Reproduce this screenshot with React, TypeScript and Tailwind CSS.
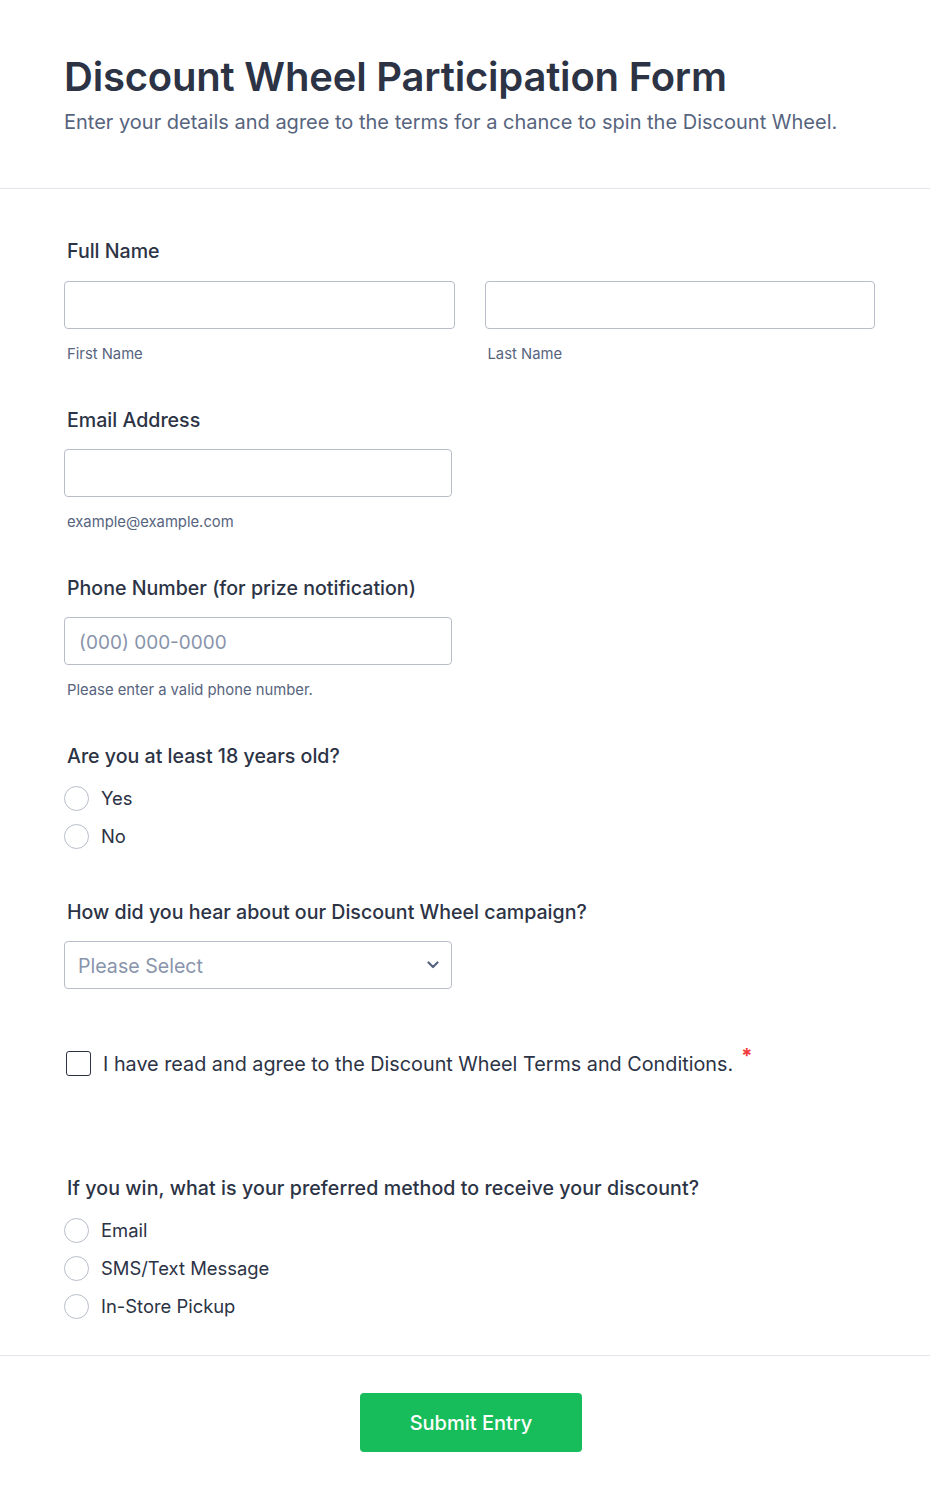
import React from "react"

function Radio({ label }: { label: string }) {
  return (
    <label className="flex items-center h-6 gap-[12px] cursor-pointer">
      <span className="w-[25px] h-[25px] rounded-full border border-[#b8bdc9] bg-white shrink-0" />
      <span className="text-[18.4px] leading-6 text-[#2c3345]">{label}</span>
    </label>
  )
}

function FieldLabel({ children, className = "" }: { children: React.ReactNode; className?: string }) {
  return <div className={`text-[19.6px] leading-6 font-medium text-[#2c3345] pl-[3px] ${className}`}>{children}</div>
}

function Sublabel({ children }: { children: React.ReactNode }) {
  return <div className="mt-[15px] text-[14.8px] leading-5 text-[#57647e] pl-[3px]">{children}</div>
}

const inputCls =
  "block h-12 rounded-[4px] border border-[#b8bdc9] bg-white px-[14px] pt-[2px] text-[19px] text-[#2c3345] placeholder:text-[#8894ab] outline-none"

export default function App() {
  return (
    <div className="min-h-[1501px] bg-white text-[#2c3345]" style={{ fontFamily: "Inter, 'Noto Sans', sans-serif" }}>
      {/* header */}
      <div className="pt-[53px] pb-[52px] pl-[64px] border-b border-[#e3e5eb]">
        <h1 className="text-[40px] leading-[48px] font-semibold text-[#2c3345] tracking-[-0.2px]">
          Discount Wheel Participation Form
        </h1>
        <p className="mt-[7px] text-[20px] leading-7 text-[#57647e]">
          Enter your details and agree to the terms for a chance to spin the Discount Wheel.
        </p>
      </div>

      <div className="pl-[64px] pr-[55px] pt-[50px] pb-[37px]">
        {/* full name */}
        <FieldLabel>Full Name</FieldLabel>
        <div className="mt-[18px] flex gap-[30px]">
          <div className="w-[391px]">
            <input className={`${inputCls} w-full`} />
            <Sublabel>First Name</Sublabel>
          </div>
          <div className="w-[391px]">
            <input className={`${inputCls} w-full`} />
            <Sublabel>Last Name</Sublabel>
          </div>
        </div>

        {/* email */}
        <FieldLabel className="mt-[44px]">Email Address</FieldLabel>
        <input className={`${inputCls} w-[388px] mt-[17px]`} />
        <Sublabel>example@example.com</Sublabel>

        {/* phone */}
        <FieldLabel className="mt-[44px]">Phone Number (for prize notification)</FieldLabel>
        <input className={`${inputCls} w-[388px] mt-[17px]`} placeholder="(000) 000-0000" />
        <Sublabel>Please enter a valid phone number.</Sublabel>

        {/* age */}
        <FieldLabel className="mt-[44px]">Are you at least 18 years old?</FieldLabel>
        <div className="mt-[18px] flex flex-col gap-[14px]">
          <Radio label="Yes" />
          <Radio label="No" />
        </div>

        {/* source */}
        <FieldLabel className="mt-[52px]">How did you hear about our Discount Wheel campaign?</FieldLabel>
        <div className="mt-[17px] w-[388px] h-12 rounded-[4px] border border-[#b8bdc9] flex items-center justify-between pl-[13px] pr-[12px]">
          <span className="text-[19.6px] pt-[3px] text-[#8894ab]">Please Select</span>
          <svg width="12" height="8" viewBox="0 0 12 8" fill="none">
            <path d="M1.5 1.5L6 6L10.5 1.5" stroke="#57647e" strokeWidth="2.2" strokeLinecap="round" strokeLinejoin="round" />
          </svg>
        </div>

        {/* terms */}
        <div className="mt-[62px] flex items-center gap-[12px] pl-[2px]">
          <span className="w-[25px] h-[25px] rounded-[3px] border-[1.5px] border-[#2c3345] shrink-0" />
          <span className="text-[19.8px] leading-6 text-[#2c3345]">
            I have read and agree to the Discount Wheel Terms and Conditions.
          </span>
          <span className="self-start -mt-[7px] -ml-[4px] text-[20px] font-bold leading-6 text-[#f23a3c]">*</span>
        </div>

        {/* preferred method */}
        <FieldLabel className="mt-[100px] tracking-[0.08px]">If you win, what is your preferred method to receive your discount?</FieldLabel>
        <div className="mt-[18px] flex flex-col gap-[14px]">
          <Radio label="Email" />
          <Radio label="SMS/Text Message" />
          <Radio label="In-Store Pickup" />
        </div>
      </div>

      {/* footer */}
      <div className="border-t border-[#e3e5eb] pt-[37px] pb-[50px] flex justify-center pl-[12px]">
        <button className="w-[222px] h-[59px] rounded-[4px] bg-[#18bd5b] text-white text-[20px] font-medium">
          Submit Entry
        </button>
      </div>
    </div>
  )
}
